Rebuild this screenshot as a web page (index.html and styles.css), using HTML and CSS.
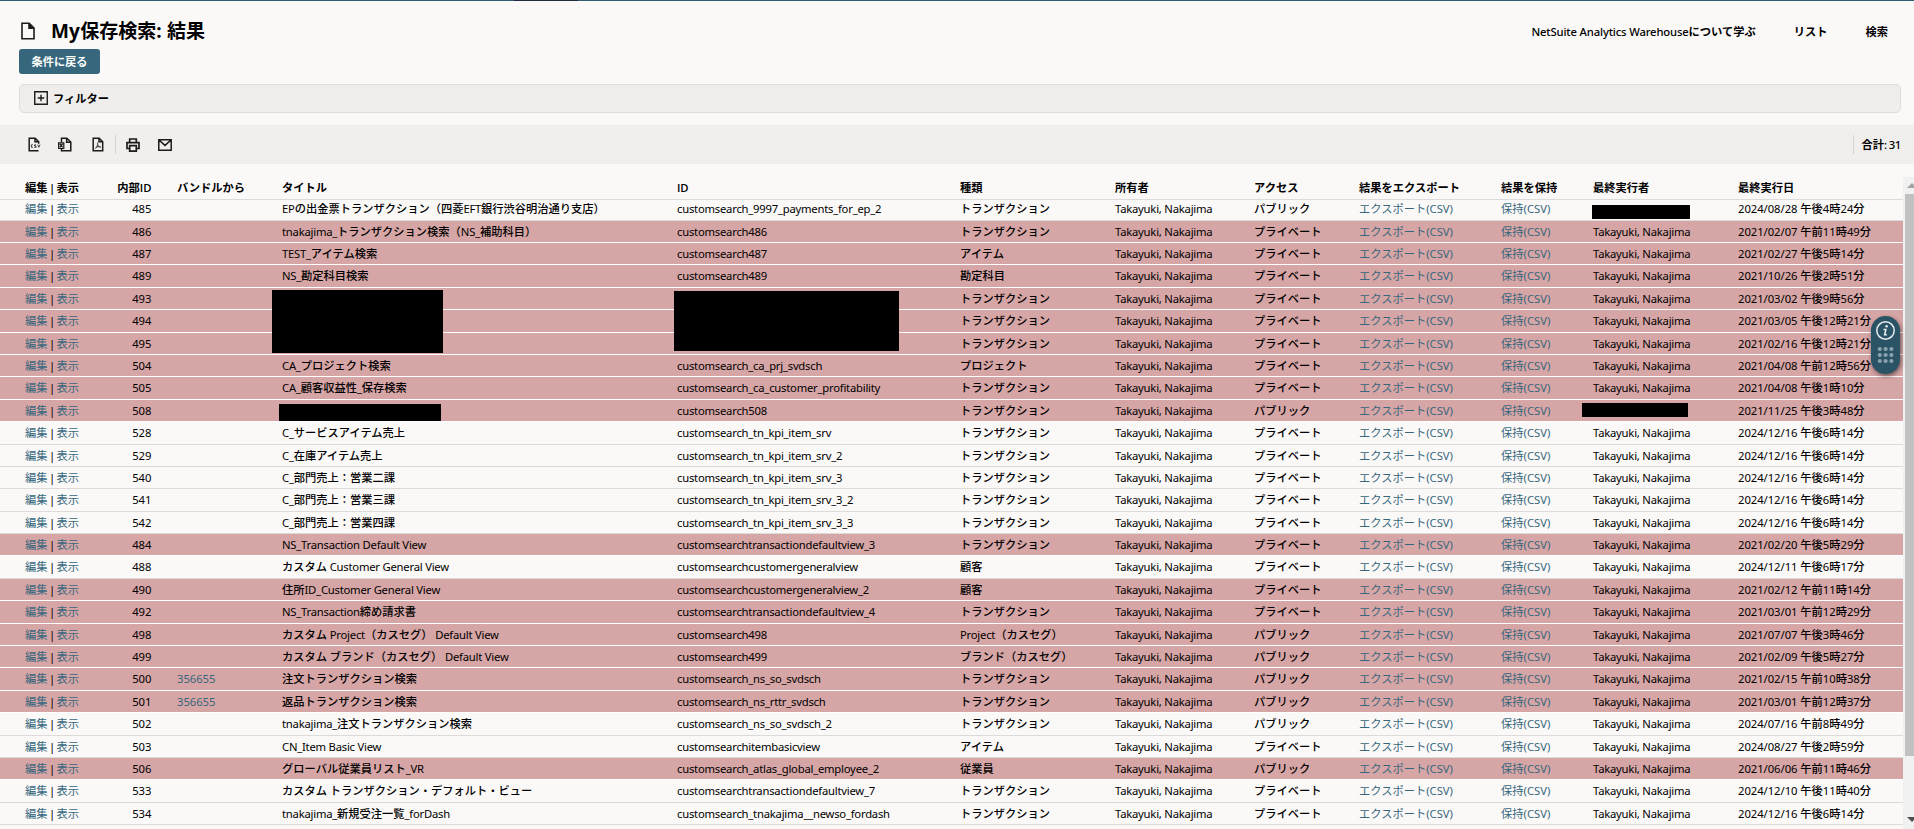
FILE: index.html
```html
<!DOCTYPE html>
<html lang="ja">
<head>
<meta charset="utf-8">
<title>My保存検索: 結果</title>
<link rel="stylesheet" href="styles.css">
</head>
<body>
<div class="page">
  <header class="page-head">
    <svg class="doc-icon" width="14" height="18" viewBox="0 0 14 18"><path d="M1 1.2h7.2L13 6v10.8H1z M8 1.2v5h5" fill="none" stroke="#1d1b1a" stroke-width="1.6"/><path d="M8 1v5.4h5z" fill="#1d1b1a"/></svg>
    <h1 class="title"><span class="en">My</span>保存検索<span class="en">: </span>結果</h1>
    <nav class="links">
      <a><span class="en">NetSuite Analytics Warehouse</span>について学ぶ</a>
      <a>リスト</a>
      <a>検索</a>
    </nav>
  </header>
  <div class="actions"><button class="btn">条件に戻る</button></div>
  <section class="filter">
    <svg width="14" height="14" viewBox="0 0 14 14"><path d="M.75.75h12.5v12.5H.75z M7 3.7v6.6 M3.7 7h6.6" fill="none" stroke="#1d1b1a" stroke-width="1.4"/></svg>
    <span>フィルター</span>
  </section>
  <div class="toolbar">
    <svg class="t-csv" width="14" height="15" viewBox="0 0 14 15"><path d="M10.5 13.7H1.2V1.2h6l3.5 3.5v2M7 1.2v3.5h3.6" fill="none" stroke="#1d1b1a" stroke-width="1.5"/><path d="M4.900 7.800H3.400v2.500h1.500M8 7.800H6.600v1.200h1.500v1.300H6.300M9.800 7.600l1 2.700 1.200-2.700" fill="none" stroke="#1d1b1a" stroke-width=".8"/></svg>
    <svg class="t-xls" width="14" height="15" viewBox="0 0 14 15"><path d="M3.5 5V1.2h5.300l4 3.800v8.700H3.500V12M8.600 1.200v4h4" fill="none" stroke="#1d1b1a" stroke-width="1.500"/><path d="M.6 5.900h5.200v5.600H.6zM1.800 7l2.800 3.400M4.600 7l-2.800 3.400" fill="none" stroke="#1d1b1a" stroke-width="1.200"/></svg>
    <svg class="t-pdf" width="12" height="15" viewBox="0 0 12 15"><path d="M1.200 1.200h6l3.500 3.500v9H1.200zM7 1.200v3.600h3.600" fill="none" stroke="#1d1b1a" stroke-width="1.500"/><path d="M5.600 5.500c.4 2.300-.4 4.600-2.400 6.200M5.700 7.500c.6 1.600 1.600 2.600 3.200 2.800M3.800 10.400c1.400-.8 3-1 4.700-.6" fill="none" stroke="#1d1b1a" stroke-width=".8"/></svg>
    <i class="sep"></i>
    <svg class="t-print" width="14" height="14" viewBox="0 0 14 14"><path d="M3.700 4.200V1h6.600v3.200M3.700 10.500H1V4.600h12v5.900h-2.700M3.700 7.700h6.600v5.400H3.700z" fill="none" stroke="#1d1b1a" stroke-width="1.700"/></svg>
    <svg class="t-mail" width="14" height="12" viewBox="0 0 14 12"><path d="M.8.8h12.400v10.400H.8z M1 1l6 5.400L13 1" fill="none" stroke="#1d1b1a" stroke-width="1.500"/></svg>
    <div class="total">合計<span class="en">: 31</span></div>
  </div>
  <main class="results">
    <div class="grid">
      <div class="row head" id="head"></div>
      <div class="viewport"><div id="rows"></div></div>
      <i class="mask m1"></i><i class="mask m2"></i><i class="mask m3"></i><i class="mask m4"></i><i class="mask m5"></i>
    </div>
    <div class="scrollbar"><i class="up"></i><i class="thumb"></i><i class="down"></i></div>
    <div class="dock">
      <svg width="29" height="58" viewBox="0 0 29 58"><circle cx="14.500" cy="14.500" r="8.700" fill="none" stroke="#e6eef1" stroke-width="1.500"/><circle cx="15.600" cy="10.300" r="1.200" fill="#e6eef1"/><path d="M12.500 13.400h2.400l-1.300 5.300h2.300" fill="none" stroke="#e6eef1" stroke-width="1.500"/><g fill="#8aa2ad"><circle cx="8.800" cy="33" r="2.100"/><circle cx="14.600" cy="33" r="2.100"/><circle cx="20.400" cy="33" r="2.100"/><circle cx="8.800" cy="39" r="2.100"/><circle cx="14.600" cy="39" r="2.100"/><circle cx="20.400" cy="39" r="2.100"/><circle cx="8.800" cy="45" r="2.100"/><circle cx="14.600" cy="45" r="2.100"/><circle cx="20.400" cy="45" r="2.100"/></g></svg>
    </div>
  </main>
</div>
<script src="rows.js"></script>
</body>
</html>
```
FILE: styles.css
```css
* { box-sizing: border-box; }
body {
  margin: 0;
  background: #fbf9f8;
  color: #000;
  font: 500 11.25px/16px "Noto Sans CJK JP", sans-serif;
}
.en { font-family: "Noto Sans", sans-serif; font-weight: 400; letter-spacing: -.22px; white-space: pre; }
.page { width: 1914px; height: 829px; overflow: hidden; display: flex; flex-direction: column; }
.page::before { content: ""; height: 1px; flex: none; background: linear-gradient(90deg, #315f76 514px, #1f2a3c 514px 578px, #315f76 578px); }
.page-head { display: flex; align-items: center; height: 48px; flex: none; padding: 12px 26px 0 21px; }
.doc-icon { margin-right: 16px; }
.title { margin: -1px 0 0; font-size: 19px; line-height: 28px; font-weight: 700; }
.title .en { font-family: "Open Sans", sans-serif; font-weight: 700; letter-spacing: .2px; }
.links { margin-left: auto; display: flex; gap: 38px; font-weight: 700; }
.links .en { font-weight: 500; letter-spacing: -.15px; }
.actions { padding-left: 19px; height: 35px; flex: none; }
.btn { display: block; width: 81px; height: 25px; padding: 0; border: 0; border-radius: 3px; background: #36677d; color: #fff; font: 700 11.2px/25px "Noto Sans CJK JP", sans-serif; }
.filter { margin: 0 13px 0 19px; height: 29px; border: 1px solid #dfdddb; border-radius: 5px; background: #f0eeec; display: flex; align-items: center; gap: 5px; padding: 0 0 1px 14px; font-weight: 700; flex: none; }
.toolbar { margin-top: 12px; height: 39px; flex: none; background: #f0efed; display: flex; align-items: center; padding: 0 13px 0 28px; }
.t-xls { margin-left: 16px; }
.t-pdf { margin-left: 20px; }
.sep { width: 1px; height: 19px; background: #d6d4d2; margin: 0 10px 0 11px; }
.t-mail { margin-left: 18px; }
.total { margin-left: auto; height: 19px; line-height: 19px; border-left: 1px solid #d6d4d2; padding-left: 7px; font-weight: 700; }
.total .en { font-weight: 500; letter-spacing: -.3px; word-spacing: -.6px; }
.results { position: relative; flex: 1; display: flex; min-height: 0; }
.grid { width: 1903px; position: relative; }
.row { display: grid; grid-template-columns: 76px 50.5px 130.5px 395px 283px 155px 139px 105px 142px 92px 145px 165px; padding-left: 25px; height: 22.4px; line-height: 21.4px; border-bottom: 1px solid #dddbd9; white-space: nowrap; }
.head { height: 36px; padding-top: 13px; font-weight: 700; }
.head .en { font-family: "Open Sans", sans-serif; font-weight: 600; }
.edit .en { letter-spacing: 0; word-spacing: -1.5px; }
.num .en, .link .en { letter-spacing: 0; }
.date .en { letter-spacing: -.04px; }
.bundle .en { letter-spacing: -.05px; }
.num { text-align: right; }
.bundle { padding-left: 25.5px; }
.viewport { height: 629px; overflow: hidden; }
.viewport > div { margin-top: -1.8px; }
.red { background: #d6a5a5; border-bottom-color: #fff; }
.link { color: #36677d; font-weight: 400; }
.mask { position: absolute; background: #000; }
.m1 { left: 1592px; top: 41px; width: 98px; height: 14px; }
.m2 { left: 272px; top: 126px; width: 171px; height: 63px; }
.m3 { left: 674px; top: 127px; width: 225px; height: 60px; }
.m4 { left: 279px; top: 240px; width: 162px; height: 17px; }
.m5 { left: 1582px; top: 239px; width: 106px; height: 14px; }
.scrollbar { flex: 1; margin-top: 13px; background: #f1f1f1; position: relative; overflow: hidden; display: flex; flex-direction: column; padding-left: 2px; }
.scrollbar .up, .scrollbar .down { border: 5px solid transparent; width: 0; height: 0; margin-left: 2px; flex: none; }
.scrollbar .up { border-bottom-color: #a3a3a3; margin-top: 1px; }
.scrollbar .thumb { height: 562px; flex: none; background: #c1c1c1; margin-top: 6px; width: 13px; }
.scrollbar .down { border-top-color: #505050; margin-top: auto; margin-bottom: 2px; }
.dock { position: absolute; left: 1871px; top: 152px; width: 29px; height: 58px; border-radius: 14.5px; background: #2b5366; box-shadow: 1px 2px 4px rgba(0,0,0,.5); }
```
FILE: rows.js
```js
const T = 'トランザクション', P = 'プライベート', U = 'パブリック', N = 'Takayuki, Nakajima';
// [highlighted, id, bundle, title, script id, type, access, last run by, last run on]
const data = [
  [0, 485, '', 'EPの出金票トランザクション（四菱EFT銀行渋谷明治通り支店）', 'customsearch_9997_payments_for_ep_2', T, U, '', '2024/08/28 午後4時24分'],
  [1, 486, '', 'tnakajima_トランザクション検索（NS_補助科目）', 'customsearch486', T, P, N, '2021/02/07 午前11時49分'],
  [1, 487, '', 'TEST_アイテム検索', 'customsearch487', 'アイテム', P, N, '2021/02/27 午後5時14分'],
  [1, 489, '', 'NS_勘定科目検索', 'customsearch489', '勘定科目', P, N, '2021/10/26 午後2時51分'],
  [1, 493, '', '', '', T, P, N, '2021/03/02 午後9時56分'],
  [1, 494, '', '', '', T, P, N, '2021/03/05 午後12時21分'],
  [1, 495, '', '', '', T, P, N, '2021/02/16 午後12時21分'],
  [1, 504, '', 'CA_プロジェクト検索', 'customsearch_ca_prj_svdsch', 'プロジェクト', P, N, '2021/04/08 午前12時56分'],
  [1, 505, '', 'CA_顧客収益性_保存検索', 'customsearch_ca_customer_profitability', T, P, N, '2021/04/08 午後1時10分'],
  [1, 508, '', '', 'customsearch508', T, U, '', '2021/11/25 午後3時48分'],
  [0, 528, '', 'C_サービスアイテム売上', 'customsearch_tn_kpi_item_srv', T, P, N, '2024/12/16 午後6時14分'],
  [0, 529, '', 'C_在庫アイテム売上', 'customsearch_tn_kpi_item_srv_2', T, P, N, '2024/12/16 午後6時14分'],
  [0, 540, '', 'C_部門売上：営業二課', 'customsearch_tn_kpi_item_srv_3', T, P, N, '2024/12/16 午後6時14分'],
  [0, 541, '', 'C_部門売上：営業三課', 'customsearch_tn_kpi_item_srv_3_2', T, P, N, '2024/12/16 午後6時14分'],
  [0, 542, '', 'C_部門売上：営業四課', 'customsearch_tn_kpi_item_srv_3_3', T, P, N, '2024/12/16 午後6時14分'],
  [1, 484, '', 'NS_Transaction Default View', 'customsearchtransactiondefaultview_3', T, P, N, '2021/02/20 午後5時29分'],
  [0, 488, '', 'カスタム Customer General View', 'customsearchcustomergeneralview', '顧客', P, N, '2024/12/11 午後6時17分'],
  [1, 490, '', '住所ID_Customer General View', 'customsearchcustomergeneralview_2', '顧客', P, N, '2021/02/12 午前11時14分'],
  [1, 492, '', 'NS_Transaction締め請求書', 'customsearchtransactiondefaultview_4', T, P, N, '2021/03/01 午前12時29分'],
  [1, 498, '', 'カスタム Project（カスセグ） Default View', 'customsearch498', 'Project（カスセグ）', U, N, '2021/07/07 午後3時46分'],
  [1, 499, '', 'カスタム ブランド（カスセグ） Default View', 'customsearch499', 'ブランド（カスセグ）', U, N, '2021/02/09 午後5時27分'],
  [1, 500, '356655', '注文トランザクション検索', 'customsearch_ns_so_svdsch', T, U, N, '2021/02/15 午前10時38分'],
  [1, 501, '356655', '返品トランザクション検索', 'customsearch_ns_rttr_svdsch', T, U, N, '2021/03/01 午前12時37分'],
  [0, 502, '', 'tnakajima_注文トランザクション検索', 'customsearch_ns_so_svdsch_2', T, U, N, '2024/07/16 午前8時49分'],
  [0, 503, '', 'CN_Item Basic View', 'customsearchitembasicview', 'アイテム', P, N, '2024/08/27 午後2時59分'],
  [1, 506, '', 'グローバル従業員リスト_VR', 'customsearch_atlas_global_employee_2', '従業員', U, N, '2021/06/06 午前11時46分'],
  [0, 533, '', 'カスタム トランザクション・デフォルト・ビュー', 'customsearchtransactiondefaultview_7', T, P, N, '2024/12/10 午後11時40分'],
  [0, 534, '', 'tnakajima_新規受注一覧_forDash', 'customsearch_tnakajima__newso_fordash', T, P, N, '2024/12/16 午後6時14分']
];
// Latin runs get their own typeface and tracking.
const mix = s => String(s).replace(/[ -~]+/g, m => `<span class="en">${m}</span>`);
const cell = (s, c = '') => `<div class="${c}">${mix(s)}</div>`;

document.getElementById('head').innerHTML =
  cell('編集 | 表示', 'edit') + cell('内部ID', 'num') + cell('バンドルから', 'bundle') +
  ['タイトル', 'ID', '種類', '所有者', 'アクセス', '結果をエクスポート', '結果を保持', '最終実行者', '最終実行日'].map(s => cell(s)).join('');

document.getElementById('rows').innerHTML = data.map(([red, id, bundle, title, sid, type, access, by, on]) =>
  `<div class="row${red ? ' red' : ''}">` +
  `<div class="edit"><a class="link">編集</a>${mix(' | ')}<a class="link">表示</a></div>` +
  cell(id, 'num') + cell(bundle, 'bundle link') + cell(title) + cell(sid) + cell(type) + cell(N) +
  cell(access) + cell('エクスポート(CSV)', 'link') + cell('保持(CSV)', 'link') + cell(by) + cell(on, 'date') +
  '</div>').join('');
```
